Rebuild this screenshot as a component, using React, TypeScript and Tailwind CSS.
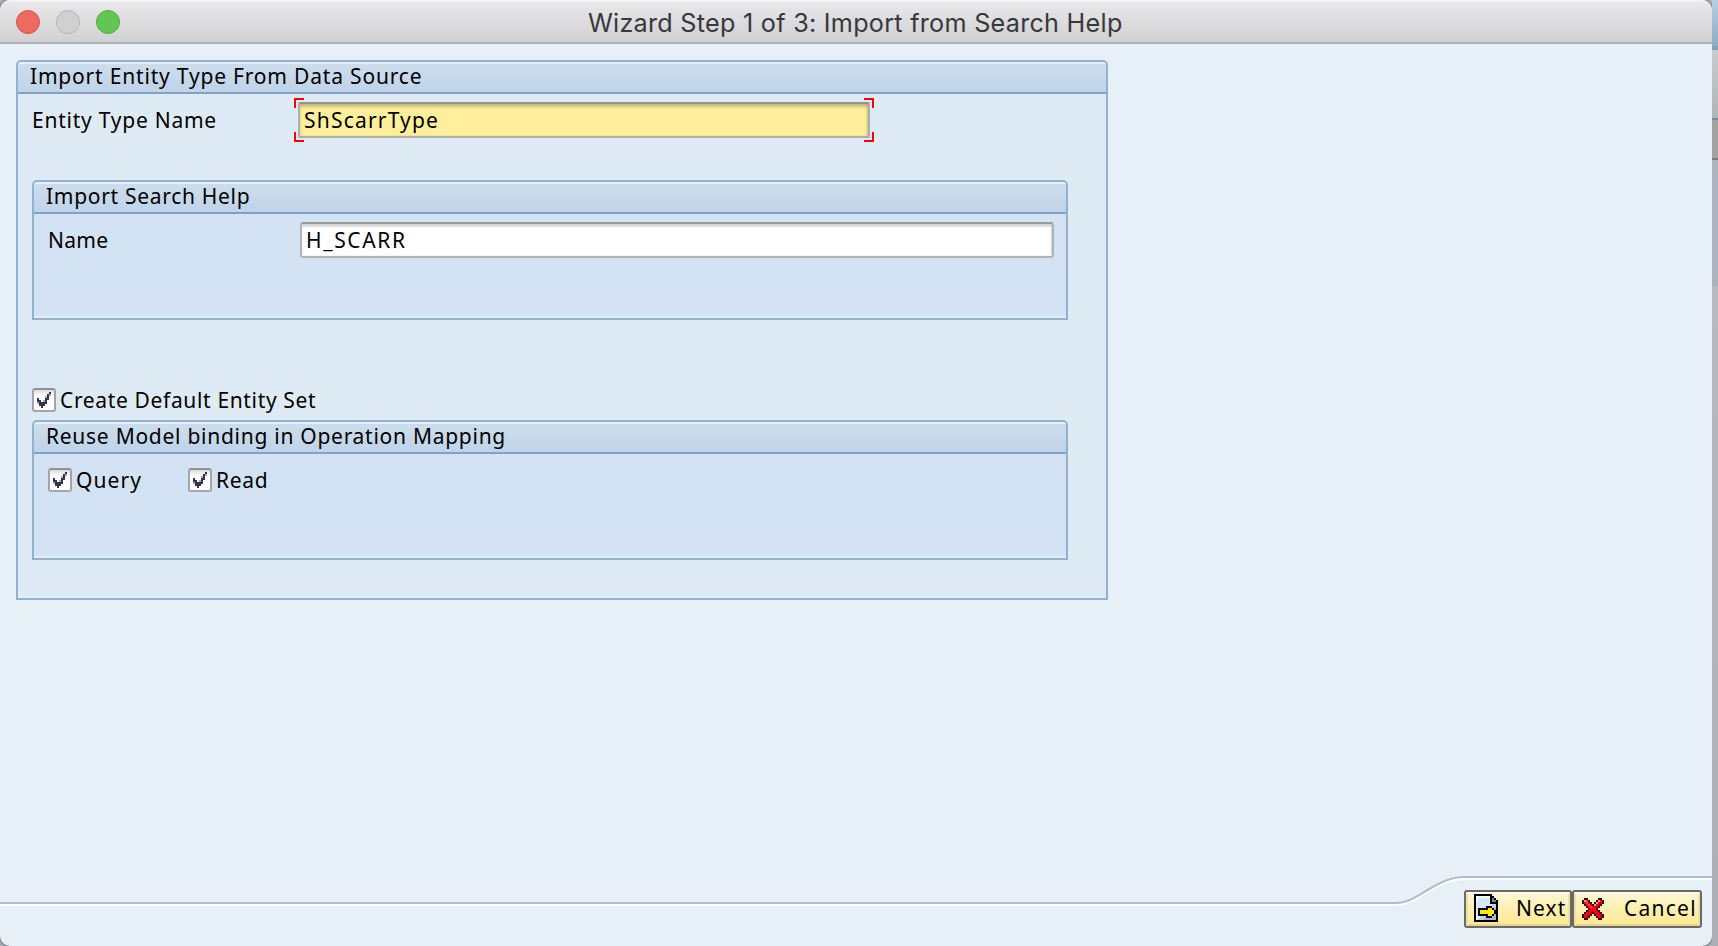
import React from "react";

type Palette = Record<string, string>;

/* Draws a bitmap icon from rows of palette letters; each cell is 2x2 px. */
const PixelIcon = ({ rows, palette, className = "" }: { rows: string[]; palette: Palette; className?: string }) => (
  <svg
    width={rows[0].length * 2}
    height={rows.length * 2}
    viewBox={`0 0 ${rows[0].length} ${rows.length}`}
    shapeRendering="crispEdges"
    className={`shrink-0 ${className}`}
  >
    {rows.flatMap((row, y) =>
      [...row].map((c, x) =>
        palette[c] ? <rect key={`${x}-${y}`} x={x} y={y} width="1" height="1" fill={palette[c]} /> : null
      )
    )}
  </svg>
);

const nextRows = [
  "kkkkkkkkk...",
  "kwwwwwwwkk..",
  "kwbbbbbbkgk.",
  "kwbbbbbbkggk",
  "kbbbbbbbkkkk",
  "kbbbbbbbbllk",
  "kbbbbbkkkllk",
  "kbkkkkkyykpk",
  "kbkyyyyyyykk",
  "kbkyyyyyyykk",
  "kbkkkkkyykpk",
  "kwwlllkkkppk",
  "kwlllppppppk",
  "kkkkkkkkkkkk",
];
const nextPalette: Palette = {
  k: "#000",
  w: "#f4faff",
  b: "#d5e9f7",
  g: "#6d8793",
  l: "#c9cfe8",
  p: "#b0b0d6",
  y: "#ffe800",
};

const cancelRows = [
  ".kk.....kk.",
  "kpok...kprk",
  "kroek.kprek",
  ".kroekprek.",
  "..krorrek..",
  "...krrrk...",
  "..krrrrek..",
  ".krrekrrek.",
  "krrek.krrek",
  "krek...krek",
  ".kk.....kk.",
];
const cancelPalette: Palette = { k: "#3a0508", p: "#ff9a90", o: "#f4453f", r: "#ee0a14", e: "#c4000e" };

const checkRows = [
  "......n",
  ".....nm",
  "....mn.",
  "n...nn.",
  "nn.mn..",
  "mnnnn..",
  ".nnn...",
  "..n....",
];
const checkPalette: Palette = { n: "#33334f", m: "#a4a4b6" };

const Check = ({ label, spacing }: { label: string; spacing: string }) => (
  <label className="flex h-6 items-center">
    <span className="flex size-6 shrink-0 items-start rounded-[3px] border-2 border-[#a3a5a6] border-t-[#919191] bg-linear-to-b from-[#dcdce0] to-white to-30% pt-[2px] pl-[3px]">
      <PixelIcon rows={checkRows} palette={checkPalette} />
    </span>
    <span className={`ml-1 leading-6 whitespace-nowrap ${spacing}`}>{label}</span>
  </label>
);

const Group = ({
  title,
  spacing,
  className,
  children,
}: {
  title: string;
  spacing: string;
  className: string;
  children: React.ReactNode;
}) => (
  <section
    className={`flex flex-col rounded-t-[5px] border-2 border-[#92b0d0] shadow-[inset_0_-2px_0_#e4eef6] ${className}`}
  >
    <h2
      className={`h-8 shrink-0 rounded-t-[3px] border-t-2 border-b-2 border-t-[#e6eff8] border-b-[#84a1c3] bg-linear-to-b from-[#cdddec] to-[#bfd4ea] pl-3 leading-[25px] whitespace-nowrap ${spacing}`}
    >
      {title}
    </h2>
    {children}
  </section>
);

const FooterLine = () => (
  <svg width="1712" height="32" viewBox="0 0 1712 32" fill="none" strokeWidth="2" className="absolute top-0 left-0">
    <path d="M0 29H1396C1418 29 1436 3 1464 3H1712" stroke="#fff" />
    <path d="M0 27H1396C1418 27 1436 1 1464 1H1712" stroke="#adbdd0" />
  </svg>
);

const FocusCorners = () => (
  <>
    <i className="absolute top-0 left-0 size-2.5 border-t-2 border-l-2 border-[#f00]" />
    <i className="absolute top-0 right-0 size-2.5 border-t-2 border-r-2 border-[#f00]" />
    <i className="absolute bottom-0 left-0 size-2.5 border-b-2 border-l-2 border-[#f00]" />
    <i className="absolute right-0 bottom-0 size-2.5 border-r-2 border-b-2 border-[#f00]" />
  </>
);

const BackgroundStrip = () => (
  <div className="flex w-1.5 flex-col shadow-[inset_2px_0_1px_#0003]">
    <div className="h-[46px] bg-linear-to-b from-[#b9cfe2] to-[#8fabc6]" />
    <div className="h-1 bg-[#8c9fb0]" />
    <div className="h-[68px] bg-linear-to-b from-[#c8cccf] to-[#b0b5b8]" />
    <div className="h-0.5 bg-[#738cae]" />
    <div className="h-[38px] bg-[#a2a2a2]" />
    <div className="h-0.5 bg-[#777c84]" />
    <div className="h-[126px] bg-[#acb3bf]" />
    <div className="flex-1 bg-linear-to-b from-[#b7bbbf] to-[#abafb4]" />
  </div>
);

const buttonStyle =
  "flex h-[38px] items-center rounded-[3px] border-2 border-[#6b6965] bg-linear-to-b from-[#fff8d6] via-[#fdf0b4] via-45% to-[#ffe890] shadow-[inset_0_2px_0_#fffbe6,inset_2px_0_0_#ece0a8,inset_-2px_0_0_#ece0a8,inset_0_-2px_0_#e6d48c]";

export default function App() {
  return (
    <div className="flex h-[946px] w-[1718px] overflow-hidden bg-[#a9afb6] font-['Noto_Sans',sans-serif] text-[21px] text-black">
      <div className="flex w-[1712px] flex-col overflow-hidden rounded-[10px] bg-[#e8f0f7] shadow-[0_0_1px_1px_#0004]">
        <header className="flex h-11 shrink-0 items-center border-t-2 border-b-2 border-t-[#f4f4f4] border-b-[#b1b0b3] bg-linear-to-b from-[#e8e7e9] to-[#d1d0d2] pl-4">
          <div className="flex gap-4">
            <i className="size-6 rounded-full border border-[#dc5148] bg-[#ee6a5f]" />
            <i className="size-6 rounded-full border border-[#b4b4b4] bg-[#d0d0d0]" />
            <i className="size-6 rounded-full border border-[#4fae40] bg-[#62c655]" />
          </div>
          <h1 className="ml-[468px] pt-[3px] font-[Inter,sans-serif] text-[25.2px] tracking-[0.26px] whitespace-nowrap text-[#38373a]">
            Wizard Step 1 of 3: Import from Search Help
          </h1>
        </header>
        <main className="flex h-[832px] shrink-0 pt-4 pl-4">
          <Group
            title="Import Entity Type From Data Source"
            spacing="tracking-[0.81px]"
            className="h-[540px] w-[1092px] bg-[#deeaf4]"
          >
            <div className="flex h-[86px] pl-3.5">
              <span className="w-[262px] pt-[11px] leading-[30px] tracking-[0.76px]">Entity Type Name</span>
              <div className="relative mt-1 h-11 w-[580px] p-1">
                <div className="h-9 rounded-[2px] border-2 border-[#adafac] border-t-[#94958f] bg-[#ffee9c] pl-1 leading-[32px] tracking-[1.2px] shadow-[inset_0_3px_3px_#0003,inset_-1px_0_2px_#0002]">
                  ShScarrType
                </div>
                <FocusCorners />
              </div>
            </div>
            <Group
              title="Import Search Help"
              spacing="tracking-[0.7px]"
              className="ml-3.5 h-[140px] w-[1036px] bg-[#d3e3f3]"
            >
              <div className="flex pt-2 pl-3.5">
                <span className="w-[252px] leading-[36px] tracking-[0.3px]">Name</span>
                <div className="h-9 w-[754px] rounded-[3px] border-2 border-[#b0b3b7] border-t-[#98999d] bg-white pl-1 leading-[32px] tracking-[1.65px] shadow-[inset_0_3px_2px_#0002,inset_-1px_0_2px_#0002]">
                  H_SCARR
                </div>
              </div>
            </Group>
            <div className="mt-[68px] mb-2 ml-3.5">
              <Check label="Create Default Entity Set" spacing="tracking-[0.65px]" />
            </div>
            <Group
              title="Reuse Model binding in Operation Mapping"
              spacing="tracking-[0.73px]"
              className="ml-3.5 h-[140px] w-[1036px] bg-[#d3e3f3]"
            >
              <div className="flex pt-3.5 pl-3.5">
                <div className="w-[140px]">
                  <Check label="Query" spacing="tracking-[1.1px]" />
                </div>
                <Check label="Read" spacing="tracking-[0.7px]" />
              </div>
            </Group>
          </Group>
        </main>
        <footer className="relative flex flex-1 items-start pt-3.5 pl-[1464px]">
          <FooterLine />
          <button className={`w-[108px] pl-2 ${buttonStyle}`}>
            <PixelIcon rows={nextRows} palette={nextPalette} className="-mt-0.5" />
            <span className="ml-[18px] tracking-[1.1px]">Next</span>
          </button>
          <button className={`w-[130px] pl-2 ${buttonStyle}`}>
            <PixelIcon rows={cancelRows} palette={cancelPalette} />
            <span className="ml-5 tracking-[1.25px]">Cancel</span>
          </button>
        </footer>
      </div>
      <BackgroundStrip />
    </div>
  );
}
